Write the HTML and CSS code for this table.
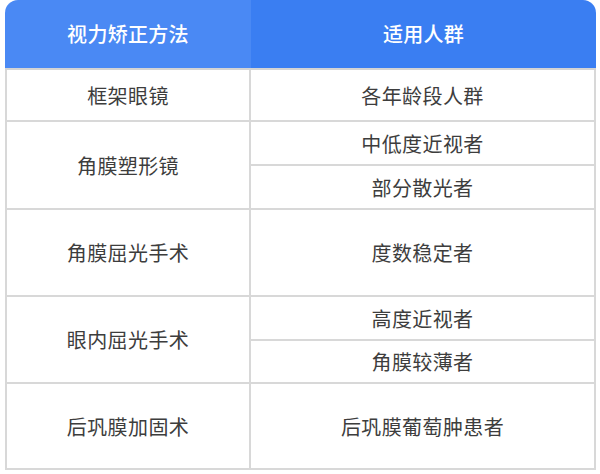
FILE: index.html
```html
<!DOCTYPE html>
<html lang="zh">
<head>
<meta charset="utf-8">
<link rel="stylesheet" href="styles.css">
</head>
<body>
<div class="table">
  <div class="th th-left">视力矫正方法</div>
  <div class="th th-right">适用人群</div>

  <div class="td left r2">框架眼镜</div>
  <div class="td right r2">各年龄段人群</div>

  <div class="td left r3-4">角膜塑形镜</div>
  <div class="td right r3">中低度近视者</div>
  <div class="td right r4">部分散光者</div>

  <div class="td left r5-6">角膜屈光手术</div>
  <div class="td right r5-6">度数稳定者</div>

  <div class="td left r7-8">眼内屈光手术</div>
  <div class="td right r7">高度近视者</div>
  <div class="td right r8">角膜较薄者</div>

  <div class="td left r9-10">后巩膜加固术</div>
  <div class="td right r9-10">后巩膜葡萄肿患者</div>
</div>
</body>
</html>
```
FILE: styles.css
```css
html, body {
  margin: 0;
  padding: 0;
  background: #ffffff;
}
body {
  font-family: "Noto Sans CJK SC", "Noto Sans", sans-serif;
}
.table {
  margin-left: 5px;
  width: 591px;
  display: grid;
  grid-template-columns: 246px 345px;
  grid-template-rows: 70px 52px 44px 44px 44px 43px 44px 43px 43px 43px;
}
.th {
  display: flex;
  align-items: center;
  justify-content: center;
  color: #ffffff;
  font-size: 20px;
  font-weight: 500;
  letter-spacing: 0.3px;
  padding-bottom: 1px;
  border-bottom: 2px solid #d4d4d4;
}
.th-left {
  background: #4a89f4;
  border-top-left-radius: 13px;
  grid-column: 1;
  grid-row: 1;
}
.th-right {
  background: #3a7ef2;
  border-top-right-radius: 13px;
  grid-column: 2;
  grid-row: 1;
}
.td {
  display: flex;
  align-items: center;
  justify-content: center;
  color: #3d3d3d;
  font-size: 20px;
  letter-spacing: 0.4px;
  border-bottom: 2px solid #d8d8d8;
  border-right: 2px solid #d8d8d8;
  box-sizing: border-box;
}
.left {
  grid-column: 1;
  border-left: 2px solid #d8d8d8;
}
.right {
  grid-column: 2;
}
.r2 { grid-row: 2; }
.r3 { grid-row: 3; }
.r4 { grid-row: 4; }
.r3-4 { grid-row: 3 / 5; }
.r5-6 { grid-row: 5 / 7; }
.r7 { grid-row: 7; }
.r8 { grid-row: 8; }
.r7-8 { grid-row: 7 / 9; }
.r9-10 { grid-row: 9 / 11; }
```
